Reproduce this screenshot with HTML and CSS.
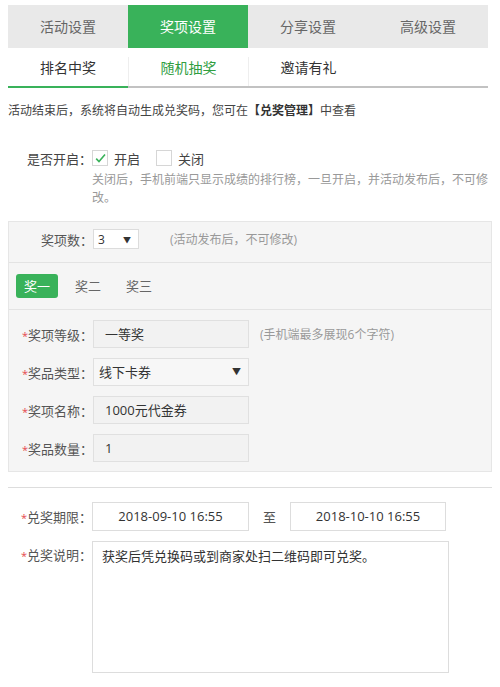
FILE: index.html
```html
<!DOCTYPE html>
<html lang="zh-CN">
<head>
<meta charset="utf-8">
<title>奖项设置</title>
<link rel="stylesheet" href="styles.css">
</head>
<body>
<div class="page">
  <div class="tabs">
    <div class="tab">活动设置</div>
    <div class="tab active">奖项设置</div>
    <div class="tab">分享设置</div>
    <div class="tab">高级设置</div>
  </div>
  <div class="subtabs">
    <div class="subtab underline">排名中奖</div>
    <div class="subtab current">随机抽奖</div>
    <div class="subtab">邀请有礼</div>
  </div>

  <p class="notice">活动结束后，系统将自动生成兑奖码，您可在<b>【兑奖管理】</b>中查看</p>

  <div class="switch-row">
    <span class="switch-label">是否开启：</span>
    <span class="check"><svg width="13" height="13" viewBox="0 0 13 13"><path d="M2.2 6.6 L5 9.6 L11 2.6" fill="none" stroke="#39b25a" stroke-width="1.6"/></svg></span>
    <span class="check-text">开启</span>
    <span class="check"></span>
    <span class="check-text">关闭</span>
  </div>
  <p class="help">关闭后，手机前端只显示成绩的排行榜，一旦开启，并活动发布后，不可修改。</p>

  <div class="panel">
    <div class="panel-count">
      <span class="form-label">奖项数：</span>
      <span class="mini-select"><span>3</span><span class="arrow">▼</span></span>
      <span class="hint count-hint">(活动发布后，不可修改)</span>
    </div>
    <div class="prize-tabs">
      <span class="prize-tab active">奖一</span>
      <span class="prize-tab">奖二</span>
      <span class="prize-tab">奖三</span>
    </div>
    <div class="prize-form">
      <div class="form-row">
        <span class="form-label"><i class="req">*</i>奖项等级：</span>
        <span class="field">一等奖</span>
        <span class="hint field-hint">(手机端最多展现6个字符)</span>
      </div>
      <div class="form-row">
        <span class="form-label"><i class="req">*</i>奖品类型：</span>
        <span class="field select"><span>线下卡券</span><span class="arrow">▼</span></span>
      </div>
      <div class="form-row">
        <span class="form-label"><i class="req">*</i>奖项名称：</span>
        <span class="field">1000元代金券</span>
      </div>
      <div class="form-row">
        <span class="form-label"><i class="req">*</i>奖品数量：</span>
        <span class="field">1</span>
      </div>
    </div>
  </div>

  <div class="rule"></div>

  <div class="period-row">
    <span class="form-label"><i class="req">*</i>兑奖期限：</span>
    <span class="date-field">2018-09-10 16:55</span>
    <span class="to">至</span>
    <span class="date-field second">2018-10-10 16:55</span>
  </div>
  <div class="desc-row">
    <span class="form-label desc-label"><i class="req">*</i>兑奖说明：</span>
    <div class="textarea">获奖后凭兑换码或到商家处扫二维码即可兑奖。</div>
  </div>
</div>
</body>
</html>
```

FILE: styles.css
```css
* { box-sizing: border-box; }

html, body {
  margin: 0;
  padding: 0;
  background: #fff;
}

body {
  font-family: "Open Sans", "Noto Sans CJK SC", sans-serif;
  color: #333;
  font-size: 13px;
}

.page {
  padding: 5px 8px 0;
  width: 500px;
}

/* main tabs */
.tabs {
  display: flex;
  width: 480px;
  height: 43px;
  background: #e9e9e9;
}
.tab {
  flex: 0 0 120px;
  text-align: center;
  line-height: 43px;
  font-size: 14px;
  color: #666;
}
.tab.active {
  background: #39b25a;
  color: #fff;
}

/* sub tabs */
.subtabs {
  display: flex;
  align-items: flex-end;
  width: 480px;
  height: 40px;
  border-bottom: 2px solid #c2c2c2;
}
.subtab {
  flex: 0 0 120px;
  text-align: center;
  font-size: 14px;
  line-height: 20px;
  padding: 1px 0 8px;
  color: #333;
  border-left: 1px solid #eeeeee;
}
.subtab.underline {
  border-left: none;
  border-bottom: 2px solid #39b25a;
  margin-bottom: -2px;
}
.subtab.current {
  color: #2f9e3f;
}

/* notice */
.notice {
  margin: 14px 0 0;
  font-size: 12px;
  line-height: 18px;
  color: #444;
}
.notice b {
  font-weight: bold;
  color: #333;
}

/* switch */
.switch-row {
  display: flex;
  align-items: center;
  height: 20px;
  margin-top: 28px;
}
.switch-label {
  width: 84px;
  text-align: right;
  font-size: 13px;
  color: #444;
}
.check {
  width: 16px;
  height: 16px;
  border: 1px solid #d6d6d6;
  background: #fff;
  display: flex;
  align-items: center;
  justify-content: center;
}
.check-text {
  margin: 0 16px 0 6px;
  font-size: 13px;
  color: #444;
}
.help {
  margin: 3px 0 0 84px;
  width: 402px;
  font-size: 12px;
  line-height: 18px;
  color: #999;
}

/* panel */
.panel {
  margin-top: 14px;
  width: 484px;
  border: 1px solid #e6e6e6;
  background: #f5f5f5;
}
.form-label {
  flex: 0 0 84px;
  width: 84px;
  text-align: right;
  font-size: 13px;
  color: #555;
  white-space: nowrap;
}
.req {
  font-style: normal;
  color: #e5484d;
  font-size: 11px;
}
.panel-count {
  display: flex;
  align-items: center;
  padding: 7px 0 13px;
}
.mini-select {
  width: 46px;
  height: 20px;
  background: #fff;
  border: 1px solid #dcdcdc;
  display: flex;
  align-items: center;
  justify-content: space-between;
  padding: 0 7px 0 4px;
  font-size: 12px;
  color: #333;
}
.arrow {
  font-size: 8px;
  color: #333;
}
.hint {
  font-size: 12px;
  color: #999;
}
.count-hint { margin-left: 31px; }

.prize-tabs {
  display: flex;
  gap: 9px;
  border-top: 1px solid #e3e3e3;
  padding: 11px 7px 11px;
}
.prize-tab {
  height: 24px;
  line-height: 24px;
  padding: 0 8px;
  font-size: 13px;
  color: #666;
  border-radius: 3px;
}
.prize-tab.active {
  background: #39b25a;
  color: #fff;
}

.prize-form {
  border-top: 1px solid #e3e3e3;
  padding: 10px 0 9px;
  display: flex;
  flex-direction: column;
  gap: 10px;
}
.form-row {
  display: flex;
  align-items: center;
}
.field {
  width: 156px;
  height: 28px;
  line-height: 26px;
  border: 1px solid #e0e0e0;
  background: #f2f2f2;
  padding-left: 11px;
  font-size: 13px;
  color: #333;
}
.field.select {
  display: flex;
  justify-content: space-between;
  align-items: center;
  padding: 0 7px 0 5px;
  background: #f7f7f7;
}
.field.select .arrow { font-size: 9px; }
.field-hint { margin-left: 11px; }

/* lower section */
.rule {
  margin-top: 15px;
  width: 484px;
  height: 1px;
  background: #dddddd;
}
.period-row {
  display: flex;
  align-items: center;
  margin-top: 14px;
}
.date-field {
  width: 157px;
  height: 29px;
  line-height: 27px;
  border: 1px solid #dddddd;
  background: #fff;
  text-align: center;
  font-size: 13px;
  color: #333;
}
.date-field.second { width: 156px; }
.to {
  margin: 0 14px;
  font-size: 13px;
  color: #555;
}
.desc-row {
  display: flex;
  align-items: flex-start;
  margin-top: 10px;
}
.desc-label {
  line-height: 18px;
  padding-top: 5px;
}
.textarea {
  width: 357px;
  height: 132px;
  border: 1px solid #dddddd;
  background: #fff;
  padding: 5px 9px;
  font-size: 13px;
  line-height: 18px;
  color: #333;
}
```
